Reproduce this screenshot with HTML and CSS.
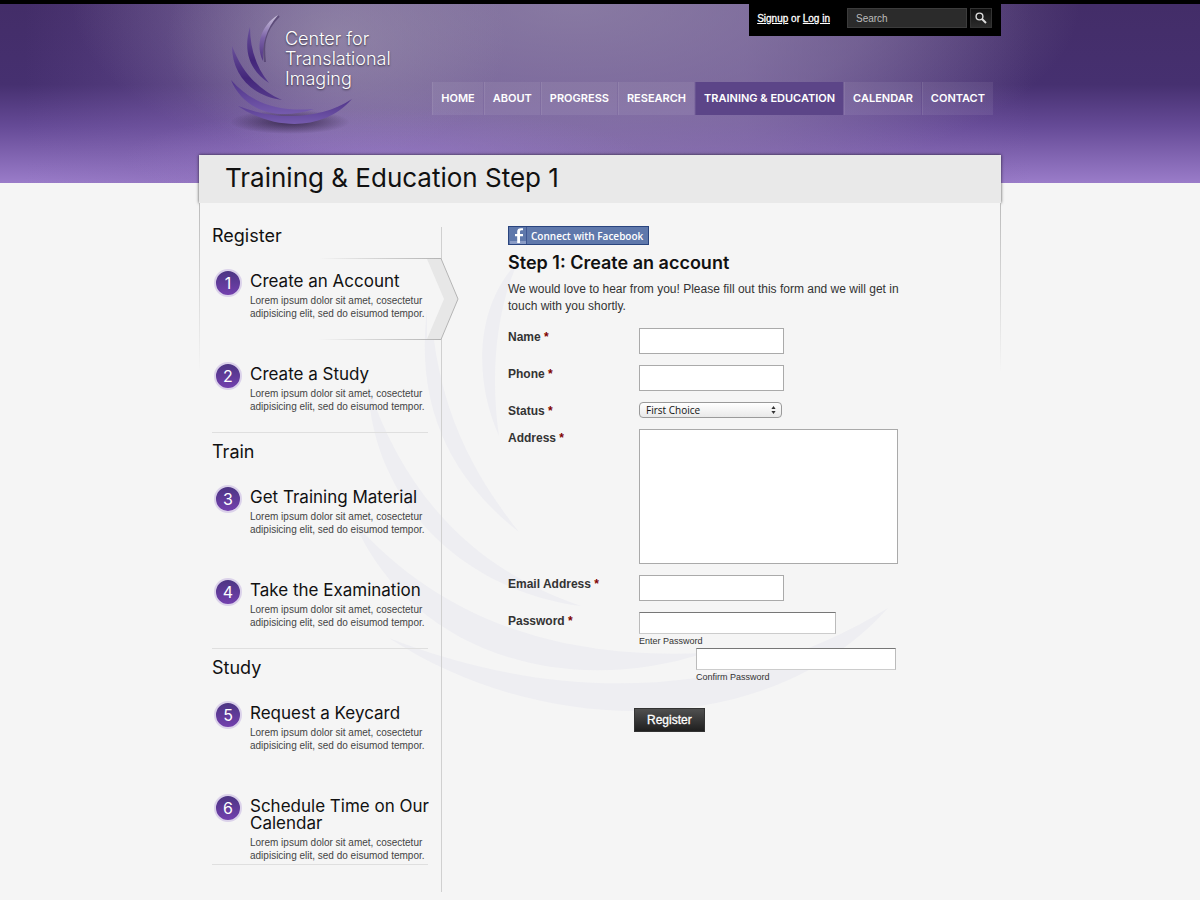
FILE: index.html
```
<!DOCTYPE html>
<html lang="en">
<head>
    <meta charset="UTF-8">
    <meta name="viewport" content="width=device-width, initial-scale=1.0">
    <title>Training &amp; Education Step 1 | Center for Translational Imaging</title>
    <link rel="stylesheet" href="styles.css">
</head>
<body>
    <header class="site-header">
        <div class="header-inner">
            <a href="#" class="logo">
                <svg class="logo-mark" width="140" height="130" viewBox="224 8 140 130" aria-hidden="true">
                    <defs>
                        <linearGradient id="light" x1="0" y1="0" x2="0" y2="1">
                            <stop offset="0" stop-color="#cfc6df"/>
                            <stop offset="0.5" stop-color="#7a61a6"/>
                            <stop offset="1" stop-color="#4d2f80"/>
                        </linearGradient>
                        <linearGradient id="dark" x1="0" y1="0" x2="0" y2="1">
                            <stop offset="0" stop-color="#6a519b"/>
                            <stop offset="0.6" stop-color="#43267a"/>
                            <stop offset="1" stop-color="#553a8c"/>
                        </linearGradient>
                        <linearGradient id="mid" x1="0" y1="0" x2="0" y2="1">
                            <stop offset="0" stop-color="#4f3389"/>
                            <stop offset="1" stop-color="#755bad"/>
                        </linearGradient>
                        <radialGradient id="shade">
                            <stop offset="0" stop-color="#2a1c3c" stop-opacity="0.8"/>
                            <stop offset="1" stop-color="#2a1c3c" stop-opacity="0"/>
                        </radialGradient>
                    </defs>
                    <ellipse cx="290" cy="122" rx="60" ry="12" fill="url(#shade)"/>
                    <path d="M279 16C263 32 263 46 265 62" fill="none" stroke="#3a2757" stroke-opacity="0.5" stroke-width="2"/>
                    <path d="M278 15C261 25 255 45 263 61C262 45 266 29 278 15Z" fill="url(#light)"/>
                    <path d="M250 27C243 50 249 70 269 83C256 67 250 48 250 27Z" fill="url(#dark)"/>
                    <path d="M232 46C232 74 251 96 282 100C258 90 242 72 232 46Z" fill="url(#dark)"/>
                    <path d="M231 80C243 109 275 122 314 109C280 112 252 104 231 80Z" fill="url(#mid)"/>
                    <path d="M238 106C273 130 323 132 352 99C318 121 275 120 238 106Z" fill="url(#mid)"/>
                </svg>
                <span class="logo-text">Center for<br>Translational<br>Imaging</span>
            </a>
            <div class="account-bar">
                <p class="account-links"><a href="#">Signup</a> or <a href="#">Log in</a></p>
                <form class="search">
                    <input type="text" placeholder="Search" aria-label="Search">
                    <button type="submit" aria-label="Go">
                        <svg width="12" height="12" viewBox="0 0 12 12" fill="none" stroke="#ddd">
                            <circle cx="4.5" cy="4.5" r="3.4" stroke-width="1.4"/>
                            <path d="M7 7L11 11" stroke-width="2"/>
                        </svg>
                    </button>
                </form>
            </div>
            <nav class="main-nav">
                <a href="#">HOME</a>
                <a href="#">ABOUT</a>
                <a href="#">PROGRESS</a>
                <a href="#">RESEARCH</a>
                <a href="#" class="current">TRAINING &amp; EDUCATION</a>
                <a href="#">CALENDAR</a>
                <a href="#">CONTACT</a>
            </nav>
        </div>
    </header>

    <div class="panel">
        <h1>Training &amp; Education Step 1</h1>

        <div class="content">
            <svg class="watermark" width="620" height="500" viewBox="340 230 620 500" fill="#eeeef2" aria-hidden="true">
                <path d="M518 262C480 300 470 370 499 436C490 375 496 310 518 262Z"/>
                <path d="M430 290C412 390 440 470 519 532C462 460 433 390 430 290Z"/>
                <path d="M368 385C372 500 460 590 581 606C480 572 405 500 368 385Z"/>
                <path d="M354 522C410 650 560 700 705 653C560 660 440 620 354 522Z"/>
                <path d="M389 638C545 740 770 740 888 608C740 700 560 705 389 638Z"/>
            </svg>

            <aside class="steps">
                <section>
                    <h2>Register</h2>
                    <a href="#" class="step active">
                        <svg class="pointer" width="160" height="82" viewBox="0 0 160 82" aria-hidden="true">
                            <defs>
                                <linearGradient id="edge" gradientUnits="userSpaceOnUse" x1="20" y1="0" x2="142" y2="0">
                                    <stop offset="0" stop-color="#aaa" stop-opacity="0"/>
                                    <stop offset="1" stop-color="#b4b4b4"/>
                                </linearGradient>
                            </defs>
                            <path d="M128 1H142L159 41L142 81H128Z" fill="#f5f5f5"/>
                            <path d="M128 1H142L159 41L142 81H128L145 41Z" fill="#e7e7e7"/>
                            <path d="M0 0.5H142L159 41L142 81.5H0" fill="none" stroke="url(#edge)"/>
                        </svg>
                        <span class="number">1</span>
                        <span class="step-text">
                            <strong>Create an Account</strong>
                            <small>Lorem ipsum dolor sit amet, cosectetur adipisicing elit, sed do eisumod tempor.</small>
                        </span>
                    </a>
                    <a href="#" class="step">
                        <span class="number">2</span>
                        <span class="step-text">
                            <strong>Create a Study</strong>
                            <small>Lorem ipsum dolor sit amet, cosectetur adipisicing elit, sed do eisumod tempor.</small>
                        </span>
                    </a>
                </section>
                <section>
                    <h2>Train</h2>
                    <a href="#" class="step">
                        <span class="number">3</span>
                        <span class="step-text">
                            <strong>Get Training Material</strong>
                            <small>Lorem ipsum dolor sit amet, cosectetur adipisicing elit, sed do eisumod tempor.</small>
                        </span>
                    </a>
                    <a href="#" class="step">
                        <span class="number">4</span>
                        <span class="step-text">
                            <strong>Take the Examination</strong>
                            <small>Lorem ipsum dolor sit amet, cosectetur adipisicing elit, sed do eisumod tempor.</small>
                        </span>
                    </a>
                </section>
                <section>
                    <h2>Study</h2>
                    <a href="#" class="step">
                        <span class="number">5</span>
                        <span class="step-text">
                            <strong>Request a Keycard</strong>
                            <small>Lorem ipsum dolor sit amet, cosectetur adipisicing elit, sed do eisumod tempor.</small>
                        </span>
                    </a>
                    <a href="#" class="step">
                        <span class="number">6</span>
                        <span class="step-text">
                            <strong>Schedule Time on Our Calendar</strong>
                            <small>Lorem ipsum dolor sit amet, cosectetur adipisicing elit, sed do eisumod tempor.</small>
                        </span>
                    </a>
                </section>
            </aside>

            <main class="main">
                <button type="button" class="fb-connect">
                    <svg width="17" height="17" viewBox="0 0 17 17" aria-hidden="true">
                        <path d="M0 14H17V17H0Z" fill="#8a9cc6"/>
                        <path d="M13 3.2H11.6C10.4 3.2 10 3.8 10 4.8V7H13V9.3H10V16H7.2V9.3H5V7H7.2V4.6C7.2 2.3 8.6 1.2 10.8 1.2H13Z" fill="#fff"/>
                        <path d="M16.5 0V17" stroke="#3f5793"/>
                    </svg>
                    <span>Connect with Facebook</span>
                </button>
                <h2>Step 1: Create an account</h2>
                <p>We would love to hear from you! Please fill out this form and we will get in touch with you shortly.</p>

                <form class="register-form">
                    <div class="field">
                        <label for="name">Name <em>*</em></label>
                        <input type="text" id="name" name="name">
                    </div>
                    <div class="field">
                        <label for="phone">Phone <em>*</em></label>
                        <input type="text" id="phone" name="phone">
                    </div>
                    <div class="field">
                        <label for="status">Status <em>*</em></label>
                        <div class="select">
                            <select id="status" name="status">
                                <option>First Choice</option>
                                <option>Second Choice</option>
                                <option>Third Choice</option>
                            </select>
                            <svg width="5" height="8" viewBox="0 0 5 8" fill="#333" aria-hidden="true">
                                <path d="M2.5 0L4.6 3H0.4ZM2.5 8L0.4 5H4.6Z"/>
                            </svg>
                        </div>
                    </div>
                    <div class="field">
                        <label for="address">Address <em>*</em></label>
                        <textarea id="address" name="address"></textarea>
                    </div>
                    <div class="field">
                        <label for="email">Email Address <em>*</em></label>
                        <input type="text" id="email" name="email">
                    </div>
                    <div class="field">
                        <label for="password">Password <em>*</em></label>
                        <div class="passwords">
                            <div class="password">
                                <input type="password" id="password" name="password">
                                <label for="password">Enter Password</label>
                            </div>
                            <div class="password confirm">
                                <input type="password" id="confirm" name="confirm">
                                <label for="confirm">Confirm Password</label>
                            </div>
                        </div>
                    </div>
                    <button type="submit" class="submit">Register</button>
                </form>
            </main>
        </div>
    </div>
</body>
</html>
```
FILE: styles.css
```
* {
    box-sizing: border-box;
}

body {
    margin: 0;
    background: #f5f5f5;
    color: #333;
    font-family: "Liberation Sans", Arial, sans-serif;
    font-size: 12px;
}

h1, h2, p {
    margin: 0;
}

h1, h2, .logo-text, .step strong {
    font-family: Inter, sans-serif;
    font-weight: 400;
    color: #111;
}

/* header */
.site-header {
    border-top: 4px solid #000;
    padding-bottom: 68px;
    background:
        radial-gradient(ellipse 260px 50px at 32% 86%, rgba(160, 128, 210, 0.45), transparent),
        radial-gradient(ellipse 170px 120px at 28% 20%, rgba(170, 165, 180, 0.4), transparent),
        radial-gradient(ellipse 42% 110% at 48% 0, rgba(150, 140, 170, 0.7), rgba(150, 140, 170, 0.4) 60%, transparent),
        linear-gradient(to right, rgba(130, 102, 172, 0) 2%, rgba(130, 102, 172, 0.55) 28%, rgba(130, 102, 172, 0.6) 62%, rgba(130, 102, 172, 0) 86%),
        linear-gradient(#432d68, #463070 45%, #654a96 68%, #9a7cc9);
}

.header-inner {
    display: grid;
    grid-template-columns: auto 1fr;
    max-width: 802px;
    margin: 0 auto;
}

.logo {
    grid-row: span 2;
    position: relative;
    padding: 25px 0 0 86px;
    text-decoration: none;
}

.logo-mark {
    position: absolute;
    left: 25px;
    top: 4px;
}

.logo-text {
    position: relative;
    display: block;
    color: #fff;
    font-size: 18px;
    font-weight: 300;
    line-height: 20px;
    text-shadow: 0 1px 2px rgba(0, 0, 0, 0.6);
}

.account-bar {
    justify-self: end;
    display: flex;
    align-items: center;
    gap: 17px;
    height: 32px;
    padding: 0 9px 4px 8px;
    background: #000;
    color: #fff;
    font-size: 10px;
}

.account-bar a {
    color: #fff;
}

.account-links {
    -webkit-text-stroke: 0.3px #fff;
}

.search {
    display: flex;
    align-items: center;
    gap: 3px;
}

.search input {
    width: 120px;
    height: 20px;
    padding: 0 8px;
    border: 1px solid #3c3c3c;
    background: #2b2b2b;
    color: #ccc;
    font: 10px "Liberation Sans", Arial, sans-serif;
}

.search input::placeholder {
    color: #bbb;
}

.search button {
    display: flex;
    align-items: center;
    justify-content: center;
    width: 22px;
    height: 20px;
    padding: 0;
    border: 1px solid #333;
    background: linear-gradient(#111, #2b2b2b);
}

.main-nav {
    justify-self: end;
    display: flex;
    gap: 1px;
    margin: 46px 8px 0 0;
}

.main-nav a {
    padding: 0 8px;
    border-left: 1px solid rgba(255, 255, 255, 0.08);
    background: rgba(255, 255, 255, 0.07);
    color: #fff;
    font-family: Inter, sans-serif;
    font-size: 11px;
    font-weight: 600;
    line-height: 33px;
    text-decoration: none;
}

.main-nav .current {
    background: #5c4588;
}

/* page panel */
.panel {
    position: relative;
    max-width: 802px;
    margin: -28px auto 0;
}

h1 {
    padding: 0 26px;
    background: #e9e9e9;
    box-shadow: 0 0 3px rgba(0, 0, 0, 0.7);
    font-size: 26px;
    line-height: 46px;
    height: 48px;
}

.content {
    position: relative;
    display: flex;
    padding: 24px 12px 8px;
    border: solid;
    border-width: 0 1px;
    border-image: linear-gradient(#bbb, rgba(187, 187, 187, 0) 170px) 1;
    background: #f5f5f5;
}

.watermark {
    position: absolute;
    left: 140px;
    top: 27px;
}

/* steps */
.steps {
    position: relative;
    flex: 0 0 230px;
    padding: 0 13px 27px 0;
    border-right: 1px solid #d0d0d0;
}

.steps section {
    border-bottom: 1px solid #dfdfdf;
}

.steps section + section {
    padding-top: 10px;
}

.steps h2 {
    margin-bottom: 13px;
    font-size: 18px;
    line-height: 18px;
}

.step {
    position: relative;
    display: flex;
    gap: 8px;
    min-height: 81px;
    padding: 15px 0 1px 2px;
    color: #444;
    text-decoration: none;
}

.step + .step {
    margin-top: 12px;
}

.number {
    flex: none;
    width: 28px;
    height: 28px;
    margin-top: -4px;
    border: 2px solid #dbd2ea;
    border-radius: 50%;
    background: linear-gradient(#4c3583, #7340ae);
    color: #fff;
    font-family: Inter, sans-serif;
    font-size: 16px;
    line-height: 25px;
    text-align: center;
}

.step-text {
    position: relative;
    margin-right: -8px;
}

.step strong {
    display: block;
    font-size: 17px;
    line-height: 17px;
}

.step small {
    display: block;
    margin-top: 4px;
    font-size: 10px;
    line-height: 13px;
}

.pointer {
    position: absolute;
    right: -31px;
    top: 0;
}

/* form */
.main {
    position: relative;
    flex: 0 1 400px;
    margin: -1px 0 0 66px;
}

.fb-connect {
    display: flex;
    align-items: center;
    gap: 4px;
    height: 19px;
    padding: 0 5px 0 1px;
    border: 1px solid #29447e;
    background: #5f78ab;
    color: #fff;
    font: 600 10px "Open Sans", sans-serif;
}

.main h2 {
    margin-top: 8px;
    font-size: 18px;
    font-weight: 600;
    line-height: 20px;
}

.main p {
    margin-top: 8px;
    line-height: 17px;
}

.register-form {
    display: flex;
    flex-direction: column;
    gap: 11px;
    margin-top: 13px;
}

.field {
    display: flex;
    align-items: flex-start;
}

.field > label {
    flex: 0 0 131px;
    font-weight: bold;
    line-height: 18px;
}

.field em {
    color: #800000;
    font-style: normal;
}

.field input, .field textarea {
    display: block;
    width: 145px;
    height: 26px;
    border: 1px solid #aaa;
    background: #fff;
}

.field textarea {
    flex: none;
    width: 259px;
    height: 135px;
    resize: none;
}

.select {
    position: relative;
    margin-bottom: -2px;
}

.select select {
    appearance: none;
    display: block;
    width: 143px;
    height: 16px;
    padding: 0 6px;
    border: 1px solid #9a9a9a;
    border-radius: 4px;
    background: linear-gradient(#fff, #e9e9e9);
    color: #111;
    font: 10px/14px "Open Sans", sans-serif;
}

.select svg {
    position: absolute;
    right: 6px;
    top: 4px;
}

.field:has(select) {
    height: 16px;
}

.password input {
    width: 197px;
    height: 22px;
    border-color: #777 #bbb #ccc;
}

.password label {
    display: block;
    font-size: 9px;
    line-height: 14px;
}

.confirm {
    margin-left: 57px;
}

.confirm input {
    width: 200px;
}

.submit {
    align-self: flex-start;
    height: 24px;
    margin: 13px 0 0 126px;
    padding: 0 12px;
    border: 1px solid #333;
    background: linear-gradient(#505050, #1f1f1f);
    color: #fff;
    font: 12px "Liberation Sans", Arial, sans-serif;
    -webkit-text-stroke: 0.3px #fff;
}
```
